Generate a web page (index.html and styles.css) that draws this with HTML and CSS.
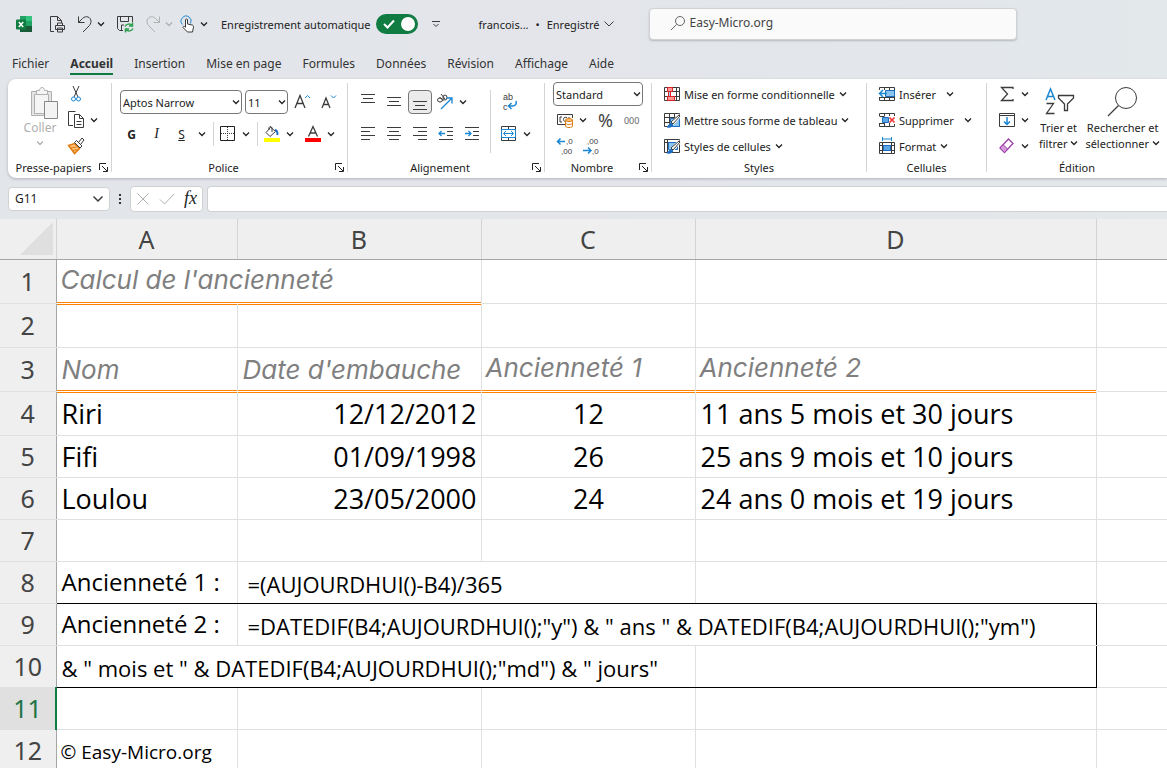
FILE: index.html
```html
<!DOCTYPE html>
<html lang="fr">
<head>
    <meta charset="UTF-8">
    <title>Calcul de l'ancienneté - Excel</title>
    <link rel="stylesheet" href="styles.css">
</head>
<body>
    <svg class="defs" aria-hidden="true">
        <symbol id="chev" viewBox="0 0 8 6"><path d="M1 1.5l3 3 3-3" fill="none" stroke="currentColor" stroke-width="1.3"/></symbol>
        <symbol id="launch" viewBox="0 0 9 9"><path d="M.5 7V.5H7M3 3l5 5M8.500 4v4.500H4" fill="none" stroke="currentColor"/></symbol>
    </svg>

    <header class="titlebar">
        <svg class="logo" width="20" height="20" viewBox="0 0 20 20">
            <path fill="#21a366" d="M6 2h6v6H6z"/><path fill="#33c481" d="M12 2h6v5h-6z"/>
            <path fill="#107c41" d="M6 7h6v5H6z"/><path fill="#21a366" d="M12 7h6v5h-6z"/>
            <path fill="#185c37" d="M6 12h12v6H6z"/><rect x="2" y="5.500" width="10" height="10" rx="1" fill="#107c41"/>
            <path d="M4.800 8l4.400 5M9.200 8l-4.400 5" stroke="#fff" stroke-width="1.500"/>
        </svg>
        <button class="tool" aria-label="Aperçu et impression"><svg width="20" height="20" viewBox="0 0 20 20" class="ic"><path d="M7 17.500H3.500v-15h7l4 4V9M10.500 2.500v4h4M8.500 11.500h9v4h-9zM10.500 11V9h5v2M10.500 14h5v4h-5z"/></svg></button>
        <button class="tool" aria-label="Annuler"><svg width="20" height="20" viewBox="0 0 20 20" class="ic"><path d="M3.500 2.500v6h6M3.500 8.500l4-4C11 1 16 3 16 7.500c0 2-1 3.500-3 5.500l-5 5"/></svg><svg class="chev"><use href="#chev"/></svg></button>
        <button class="tool" aria-label="Enregistrer"><svg width="20" height="20" viewBox="0 0 20 20" class="ic"><path d="M8 16.500H4.500l-2-2v-12h15V8M5.500 2.500v5h8v-5M6.500 16v-5H9"/><path class="g" d="M10 12.500c1-2.500 5-3.500 7-1M17.500 8.500v3.500H14M18 14.500c-1 2.500-5 3.500-7 1M10.500 18.500V15H14"/></svg></button>
        <button class="tool off" aria-label="Rétablir" disabled><svg width="20" height="20" viewBox="0 0 20 20" class="ic"><path d="M16.500 2.500v6h-6M16.500 8.500l-4-4C9 1 4 3 4 7.500c0 2 1 3.500 3 5.500l5 5"/></svg><svg class="chev"><use href="#chev"/></svg></button>
        <button class="tool touch" aria-label="Mode tactile/souris"><svg width="20" height="20" viewBox="0 0 20 20" class="ic"><path class="b" d="M4.500 10.500a5 5 0 1 1 8-1"/><path fill="#fff" d="M7.500 13V6c0-1.500 2-1.500 2 0v4l4.500 1c1 0 1.500 1 1.500 2l-1 5H9.500L5 13.500c0-1.500 1.500-1.500 2.500 0"/></svg><svg class="chev"><use href="#chev"/></svg></button>
        <label class="autosave">Enregistrement automatique
            <input type="checkbox" checked><span class="switch"><svg width="12" height="10" viewBox="0 0 12 10"><path d="M1 5l3.500 3.500L11 1.500" fill="none" stroke="#fff" stroke-width="2"/></svg><i></i></span>
        </label>
        <button class="tool custom" aria-label="Personnaliser la barre"><svg width="10" height="8" viewBox="0 0 10 8" class="ic"><path d="M1 1.500h8M2.500 4L5 6.500 7.500 4"/></svg></button>
        <button class="file"><span>francois...</span><span>•</span><span>Enregistré</span><svg width="12" height="8" viewBox="0 0 12 8" class="ic"><path d="M1.500 1.500L6 6l4.500-4.500"/></svg></button>
        <label class="search">
            <svg width="16" height="16" viewBox="0 0 16 16" class="ic"><circle cx="10" cy="6" r="4.500"/><path d="M6.500 9.500L1 15"/></svg>
            <input type="text" value="Easy-Micro.org" aria-label="Rechercher">
        </label>
    </header>

    <nav class="tabs">
        <a href="#">Fichier</a>
        <a href="#" class="active">Accueil</a>
        <a href="#">Insertion</a>
        <a href="#">Mise en page</a>
        <a href="#">Formules</a>
        <a href="#">Données</a>
        <a href="#">Révision</a>
        <a href="#">Affichage</a>
        <a href="#">Aide</a>
    </nav>

    <section class="ribbon">
        <div class="group clipboard">
            <div class="tools">
                <button class="big off" disabled>
                    <svg width="30" height="34" viewBox="0 0 30 34" class="ic"><path fill="#e4e4e4" d="M3.500 5.500h20v24h-20z"/><path fill="#f5f5f5" d="M6.500 8.500h14v19h-14z"/><path fill="#f5f5f5" d="M8.500 8.500v-4h3c0-4 5-4 5 0h3v4z"/><path fill="#f3f3f3" stroke="#888" d="M16.500 15.500h13v17h-13z"/></svg>
                    <span>Coller</span><svg class="chev"><use href="#chev"/></svg>
                </button>
                <div class="stack">
                    <button class="tool" aria-label="Couper"><svg width="20" height="20" viewBox="0 0 20 20" class="ic"><path d="M7 2l5 11M13 2L8 13"/><g class="b"><circle cx="7.500" cy="15" r="2"/><circle cx="12.500" cy="15" r="2"/></g></svg></button>
                    <button class="tool" aria-label="Copier"><svg width="20" height="20" viewBox="0 0 20 20" class="ic"><path d="M7 15.500H2.500v-14h7M8.500 4.500h5l4 4v9h-9zM13.500 4.500v4h4M10.500 11.500h5M10.500 14.500h5"/></svg><svg class="chev"><use href="#chev"/></svg></button>
                    <button class="tool" aria-label="Reproduire la mise en forme"><svg width="20" height="20" viewBox="0 0 20 20" class="ic"><path fill="#ffc27a" stroke="#e07b10" stroke-width="1.500" d="M2.500 9.500l6-2 5 5-5 5z"/><path stroke="#e07b10" d="M4.500 12l6-1M6.500 14.500l5-1"/><path fill="#fff" d="M8.500 6.500l2-2 5.500 5.500-2 2zM12.500 6.500l3.500-4.500 2 2-3.500 4.500"/></svg></button>
                </div>
            </div>
            <div class="caption"><span>Presse-papiers</span><button aria-label="Options du presse-papiers"><svg width="9" height="9"><use href="#launch"/></svg></button></div>
        </div>
        <div class="vsep"></div>

        <div class="group font">
            <div class="tools two">
                <div class="line">
                    <span class="combo name"><select aria-label="Police"><option>Aptos Narrow</option></select><svg class="chev"><use href="#chev"/></svg></span>
                    <span class="combo size"><select aria-label="Taille"><option>11</option></select><svg class="chev"><use href="#chev"/></svg></span>
                    <button class="tool wide" aria-label="Agrandir la police"><svg width="20" height="20" viewBox="0 0 20 20" class="ic"><path stroke-width="1.300" d="M3 16L8 3.500 13 16M4.800 11.500h6.400"/><path class="b" d="M13 6l2.500-2.500L18 6"/></svg></button>
                    <button class="tool wide" aria-label="Réduire la police"><svg width="20" height="20" viewBox="0 0 20 20" class="ic"><path stroke-width="1.300" d="M4 16L8 6l4 10M5.500 12.500h5"/><path class="b" d="M13 3.500L15.500 6 18 3.500"/></svg></button>
                </div>
                <div class="line format">
                    <button class="tool letter"><b>G</b></button>
                    <button class="tool letter"><em>I</em></button>
                    <button class="tool letter"><u>S</u></button>
                    <button class="tool" aria-label="Options de soulignement"><svg class="chev"><use href="#chev"/></svg></button>
                    <span class="sep"></span>
                    <button class="tool" aria-label="Bordures"><svg width="20" height="20" viewBox="0 0 20 20" class="ic"><path stroke="#222" d="M2.500 2.500h14v14h-14z"/><path stroke-dasharray="1 1" d="M3 9.500h13M9.500 3v13"/></svg><svg class="chev"><use href="#chev"/></svg></button>
                    <span class="sep"></span>
                    <button class="tool" aria-label="Couleur de remplissage"><svg width="20" height="20" viewBox="0 0 20 20" class="ic"><path fill="#ff0" stroke="none" d="M2 14h16v4H2z"/><path d="M8.500 3.500L4 8.500l4 4 5.500-5-5-4.500zM7 6c-1-3 2-5 3-2v4"/><path stroke="#1b6ec2" stroke-width="2" d="M13 6c2 0 2.500 2 2.500 5"/></svg><svg class="chev"><use href="#chev"/></svg></button>
                    <button class="tool color" aria-label="Couleur de police"><svg width="20" height="20" viewBox="0 0 20 20" class="ic"><path fill="red" stroke="none" d="M2 14h16v4H2z"/><path stroke-width="1.300" d="M5.500 12.500l4.500-10 4.500 10M7 9h6"/></svg><svg class="chev"><use href="#chev"/></svg></button>
                </div>
            </div>
            <div class="caption"><span>Police</span><button aria-label="Options de police"><svg width="9" height="9"><use href="#launch"/></svg></button></div>
        </div>
        <div class="vsep"></div>

        <div class="group align">
            <div class="tools">
                <div class="two">
                    <div class="line">
                        <button class="tool wide" aria-label="Aligner en haut"><svg width="20" height="20" viewBox="0 0 20 20" class="ic"><path d="M3 2.500h14M5 6.500h10M3 10.500h14"/></svg></button>
                        <button class="tool wide" aria-label="Aligner au centre"><svg width="20" height="20" viewBox="0 0 20 20" class="ic"><path d="M3 5.500h14M5 9.500h10M3 13.500h14"/></svg></button>
                        <button class="tool pressed" aria-label="Aligner en bas"><svg width="20" height="20" viewBox="0 0 20 20" class="ic"><path d="M3 9.500h14M5 13.500h10M3 17.500h14"/></svg></button>
                        <button class="tool orient" aria-label="Orientation"><svg width="20" height="20" viewBox="0 0 20 20" class="ic"><ellipse cx="5" cy="8" rx="2.500" ry="2"/><path d="M4.500 5l4 4"/><ellipse cx="10" cy="5.500" rx="2" ry="2.500"/><path d="M6 2l4 5"/><path class="b" stroke-width="1.300" d="M6 17L17 6M11.500 6H17v5.500"/></svg><svg class="chev"><use href="#chev"/></svg></button>
                    </div>
                    <div class="line">
                        <button class="tool wide" aria-label="Aligner à gauche"><svg width="20" height="20" viewBox="0 0 20 20" class="ic"><path d="M3 3.500h14M3 7.500h9M3 11.500h14M3 15.500h9"/></svg></button>
                        <button class="tool wide" aria-label="Centrer"><svg width="20" height="20" viewBox="0 0 20 20" class="ic"><path d="M3 3.500h14M5 7.500h10M3 11.500h14M5 15.500h10"/></svg></button>
                        <button class="tool wide" aria-label="Aligner à droite"><svg width="20" height="20" viewBox="0 0 20 20" class="ic"><path d="M3 3.500h14M8 7.500h9M3 11.500h14M8 15.500h9"/></svg></button>
                        <button class="tool wide" aria-label="Diminuer le retrait"><svg width="20" height="20" viewBox="0 0 20 20" class="ic"><path d="M3 3.500h14M11 7.500h6M11 11.500h6M3 15.500h14"/><path class="b" stroke-width="1.300" d="M9 9.500H3M5.500 7L3 9.500 5.500 12"/></svg></button>
                        <button class="tool wide" aria-label="Augmenter le retrait"><svg width="20" height="20" viewBox="0 0 20 20" class="ic"><path d="M3 3.500h14M11 7.500h6M11 11.500h6M3 15.500h14"/><path class="b" stroke-width="1.300" d="M3 9.500h6M6.500 7L9 9.500 6.500 12"/></svg></button>
                    </div>
                </div>
                <div class="vsep inner"></div>
                <div class="two wrapcol">
                    <div class="line">
                        <button class="tool" aria-label="Renvoyer à la ligne"><svg width="20" height="20" viewBox="0 0 20 20" class="ic"><text class="ab" x="4" y="8">ab</text><text class="ab" x="4" y="18">c</text><path class="b" stroke-width="1.500" d="M17 9c1 3-1 5-3 5h-4M12.500 11l-3 3 3 3"/></svg></button>
                    </div>
                    <div class="line">
                        <button class="tool" aria-label="Fusionner et centrer"><svg width="20" height="20" viewBox="0 0 20 20" class="ic"><path d="M2.500 2.500h14v14h-14zM9.500 2v4M9.500 13v4"/><path class="b" fill="#fff" d="M2.500 5.500h14v8h-14z"/><path class="b" d="M5 9.500h9M7 7L4.500 9.500 7 12M12 7l2.500 2.500L12 12"/></svg><svg class="chev"><use href="#chev"/></svg></button>
                    </div>
                </div>
            </div>
            <div class="caption"><span>Alignement</span><button aria-label="Options d'alignement"><svg width="9" height="9"><use href="#launch"/></svg></button></div>
        </div>
        <div class="vsep"></div>

        <div class="group number">
            <div class="tools three">
                <div class="line"><span class="combo fmt"><select aria-label="Format de nombre"><option>Standard</option></select><svg class="chev"><use href="#chev"/></svg></span></div>
                <div class="line money">
                    <button class="tool" aria-label="Format comptable"><svg width="20" height="20" viewBox="0 0 20 20" class="ic"><path d="M10 14.500H2.500v-10h15V8M7 7H5v5h2M12 7.500c-3-1-3.500 1-3.500 2s.500 2 2 2M14 8V7"/><path fill="#fff" stroke="#e07b10" d="M10.500 10v6c0 2 7 2 7 0v-6"/><ellipse cx="14" cy="10" rx="3.500" ry="1.500" fill="#ffc27a" stroke="#e07b10"/><path stroke="#e07b10" d="M10.500 13c0 2 7 2 7 0"/></svg><svg class="chev"><use href="#chev"/></svg></button>
                    <button class="tool pct">%</button>
                    <button class="tool zeros">000</button>
                </div>
                <div class="line">
                    <button class="tool wide" aria-label="Ajouter une décimale"><svg width="20" height="20" viewBox="0 0 20 20" class="ic"><path class="b" stroke-width="1.500" d="M10 5.500H2.500M5.500 2.500l-3 3 3 3"/><text x="11" y="8">,0</text><text x="6" y="18">,00</text></svg></button>
                    <button class="tool wide" aria-label="Réduire les décimales"><svg width="20" height="20" viewBox="0 0 20 20" class="ic"><text x="6" y="8">,00</text><text x="11" y="18">,0</text><path class="b" stroke-width="1.500" d="M2 14.500h8M7 11.500l3 3-3 3"/></svg></button>
                </div>
            </div>
            <div class="caption"><span>Nombre</span><button aria-label="Options de nombre"><svg width="9" height="9"><use href="#launch"/></svg></button></div>
        </div>
        <div class="vsep"></div>

        <div class="group styles">
            <div class="tools three">
                <button class="text"><svg width="20" height="20" viewBox="0 0 20 20" class="ic"><path d="M2.500 3.500h15v13h-15zM2 7.500h15M2 12.500h15M6.500 3v13M14.500 3v13"/><path fill="#f99" stroke="#d22" d="M5.500 3.500h5v4h-5zM5.500 12.500h7v4h-7z"/><path fill="#9cf" stroke="#d22" d="M6.500 7.500h2v5h-2z"/></svg>Mise en forme conditionnelle<svg class="chev"><use href="#chev"/></svg></button>
                <button class="text"><svg width="20" height="20" viewBox="0 0 20 20" class="ic"><path d="M2.500 3.500h15v13h-15zM2 7.500h15M2 12.500h6M7.500 3v13M12.500 3v5"/><path fill="#8cc4f0" stroke="#1b6ec2" d="M8.500 8.500h9v8h-9z"/><path stroke="#fff" stroke-width="4" d="M18 5l-9 10"/><path fill="#fff" d="M17 5l1 1-7 8-2-2z"/><path fill="#1b6ec2" stroke="#1b6ec2" d="M9 13l2 2c-1 2-3 2.500-6 2 2-1 2-3 4-4z"/></svg>Mettre sous forme de tableau<svg class="chev"><use href="#chev"/></svg></button>
                <button class="text"><svg width="20" height="20" viewBox="0 0 20 20" class="ic"><path d="M2.500 3.500h15v13h-15zM2 6.500h15M5.500 3v13"/><path fill="#8cc4f0" stroke="#1b6ec2" d="M6.500 6.500h9v7h-9z"/><path stroke="#fff" stroke-width="4" d="M18 5l-9 10"/><path fill="#fff" d="M17 5l1 1-7 8-2-2z"/><path fill="#1b6ec2" stroke="#1b6ec2" d="M9 13l2 2c-1 2-3 2.500-6 2 2-1 2-3 4-4z"/></svg>Styles de cellules<svg class="chev"><use href="#chev"/></svg></button>
            </div>
            <div class="caption"><span>Styles</span></div>
        </div>
        <div class="vsep"></div>

        <div class="group cells">
            <div class="tools three">
                <button class="text"><svg width="20" height="20" viewBox="0 0 20 20" class="ic"><path d="M2.500 6V3.500h15v13h-15V13M7.500 3v3M12.500 3v13M7.500 13v3M2.500 13.500h15"/><path fill="#8cc4f0" stroke="#1b6ec2" d="M8.500 6.500h9v6h-9z"/><path class="b" stroke-width="1.500" d="M10 9.500H2.500M6 6L2.500 9.500 6 13"/></svg>Insérer<svg class="chev far"><use href="#chev"/></svg></button>
                <button class="text"><svg width="20" height="20" viewBox="0 0 20 20" class="ic"><path d="M2.500 6V3.500h15V6M2.500 13v3.500h15V14M7.500 3v3M12.500 3v3M7.500 13v3M12.500 13v3M2.500 6.500h5M2.500 13.500h5"/><path fill="#5ba7e6" stroke="#1b6ec2" d="M5.500 7.500h6v5h-6z"/><path stroke="#e33" stroke-width="1.600" d="M12.500 7.500l5 5M17.500 7.500l-5 5"/></svg>Supprimer<svg class="chev far"><use href="#chev"/></svg></button>
                <button class="text"><svg width="20" height="20" viewBox="0 0 20 20" class="ic"><path d="M2.500 6.500h15v11h-15zM2.500 9.500h15M2.500 14.500h15M5.500 6v11M14.500 6v11"/><path fill="#5ba7e6" stroke="#1b6ec2" d="M6.500 9.500h7v5h-7z"/><path class="b" d="M5.500 1v4M14.500 1v4M6 3h8"/></svg>Format<svg class="chev"><use href="#chev"/></svg></button>
            </div>
            <div class="caption"><span>Cellules</span></div>
        </div>
        <div class="vsep"></div>

        <div class="group edit">
            <div class="tools">
                <div class="three">
                    <div class="line"><button class="tool" aria-label="Somme automatique"><svg width="20" height="20" viewBox="0 0 20 20" class="ic"><path stroke-width="1.300" d="M16 5V3.500H4.500l6 6.500-6 6.500H16V15"/></svg><svg class="chev"><use href="#chev"/></svg></button></div>
                    <div class="line"><button class="tool" aria-label="Recopier"><svg width="20" height="20" viewBox="0 0 20 20" class="ic"><path d="M2.500 3.500h15v13h-15zM2.500 5.500h15"/><path class="b" stroke-width="1.500" d="M10 7v7M7 11.500l3 3 3-3"/></svg><svg class="chev"><use href="#chev"/></svg></button></div>
                    <div class="line"><button class="tool" aria-label="Effacer"><svg width="20" height="20" viewBox="0 0 20 20" class="ic"><path fill="#fff" stroke="#9b3fa8" stroke-width="1.300" d="M3 12l8.500-9 4.500 4.500-8.500 9z"/><path fill="#d69bdd" stroke="#9b3fa8" d="M3 12l3-3.500 4.500 4.500-3 3.500z"/></svg><svg class="chev"><use href="#chev"/></svg></button></div>
                </div>
                <button class="big sort">
                    <svg width="34" height="34" viewBox="0 0 34 34" class="ic"><path class="b" stroke-width="1.500" d="M4 14L8.500 3 13 14M5.500 10.500h6"/><path stroke-width="1.300" d="M4.500 17.500h7l-7 10h8"/><path stroke-width="1.300" d="M16.500 9.500h15V12l-6 6v6.500h-3V18l-6-6z"/></svg>
                    <span>Trier et<br>filtrer <svg class="chev"><use href="#chev"/></svg></span>
                </button>
                <button class="big find">
                    <svg width="34" height="34" viewBox="0 0 34 34" class="ic"><circle cx="20" cy="12" r="10.500"/><path stroke-width="1.300" d="M12.500 19.500L2 30"/></svg>
                    <span>Rechercher et<br>sélectionner <svg class="chev"><use href="#chev"/></svg></span>
                </button>
            </div>
            <div class="caption"><span>Édition</span></div>
        </div>
    </section>

    <div class="formulabar">
        <span class="combo ref"><select aria-label="Zone Nom"><option>G11</option></select><svg width="12" height="8" viewBox="0 0 12 8" class="ic"><path stroke-width="1.500" d="M1.500 1.500L6 6l4.500-4.500"/></svg></span>
        <span class="dots"><i></i><i></i><i></i></span>
        <div class="fx">
            <button class="tool off" aria-label="Annuler la saisie"><svg width="14" height="14" viewBox="0 0 14 14" class="ic"><path d="M1.500 1.500l11 11M12.500 1.500l-11 11"/></svg></button>
            <button class="tool off" aria-label="Entrer"><svg width="16" height="14" viewBox="0 0 16 14" class="ic"><path d="M1 7.500L5.500 12 15 2"/></svg></button>
            <button class="tool fn">fx</button>
        </div>
        <input class="formula" type="text" aria-label="Barre de formule">
    </div>

    <main class="sheet">
        <table>
            <colgroup><col class="c-row"><col class="c-a"><col class="c-b"><col class="c-c"><col class="c-d"><col></colgroup>
            <thead>
                <tr><th class="corner"><svg width="33" height="33" viewBox="0 0 33 33"><path d="M33 0v33H0z" fill="#dfdfdf"/></svg></th><th>A</th><th>B</th><th>C</th><th>D</th><th></th></tr>
            </thead>
            <tbody>
                <tr class="tall"><th>1</th><td colspan="2" class="head raised">Calcul de l'ancienneté</td><td></td><td></td><td></td></tr>
                <tr class="tall after"><th>2</th><td class="ruled"></td><td class="ruled"></td><td></td><td></td><td></td></tr>
                <tr class="tall"><th>3</th><td class="head">Nom</td><td class="head">Date d'embauche</td><td class="head raised">Ancienneté 1</td><td class="head raised">Ancienneté 2</td><td></td></tr>
                <tr class="tall"><th>4</th><td class="ruled">Riri</td><td class="ruled right">12/12/2012</td><td class="ruled center">12</td><td class="ruled">11 ans 5 mois et 30 jours</td><td></td></tr>
                <tr><th>5</th><td>Fifi</td><td class="right">01/09/1998</td><td class="center">26</td><td>25 ans 9 mois et 10 jours</td><td></td></tr>
                <tr><th>6</th><td>Loulou</td><td class="right">23/05/2000</td><td class="center">24</td><td>24 ans 0 mois et 19 jours</td><td></td></tr>
                <tr><th>7</th><td></td><td></td><td></td><td></td><td></td></tr>
                <tr class="above"><th>8</th><td class="label">Ancienneté 1 :</td><td colspan="2" class="code indent">=(AUJOURDHUI()-B4)/365</td><td></td><td></td></tr>
                <tr><th>9</th><td class="label">Ancienneté 2 :</td><td colspan="3" class="code indent edge">=DATEDIF(B4;AUJOURDHUI();"y") &amp; " ans " &amp; DATEDIF(B4;AUJOURDHUI();"ym")</td><td></td></tr>
                <tr class="above"><th>10</th><td colspan="3" class="code">&amp; " mois et " &amp; DATEDIF(B4;AUJOURDHUI();"md") &amp; " jours"</td><td class="edge"></td><td></td></tr>
                <tr class="current"><th>11</th><td></td><td></td><td></td><td></td><td></td></tr>
                <tr><th>12</th><td class="credit">© Easy-Micro.org</td><td></td><td></td><td></td><td></td></tr>
            </tbody>
        </table>
    </main>
</body>
</html>
```
FILE: styles.css
```css
* {
    box-sizing: border-box;
}

body {
    display: flex;
    flex-direction: column;
    height: 100vh;
    margin: 0;
    overflow: hidden;
    background: linear-gradient(90deg, #e2e5ea, #e3e5ea 50%, #e3e8eb);
    font-family: "Noto Sans", "Open Sans", sans-serif;
    font-size: 11px;
    color: #222;
}

button, input, select {
    font: inherit;
    color: inherit;
}

button {
    display: flex;
    align-items: center;
    flex: none;
    padding: 0;
    border: 0;
    background: none;
    white-space: nowrap;
}

svg {
    flex: none;
    display: block;
}

.defs {
    position: absolute;
    width: 0;
    height: 0;
}

.ic {
    fill: none;
    stroke: #3b3b3b;
}

.ic .b {
    stroke: #1b87d2;
}

.ic .g {
    stroke: #2fa04e;
    stroke-width: 1.5;
}

.ic text {
    font-family: "Liberation Sans", sans-serif;
    font-size: 8px;
    fill: #3b3b3b;
    stroke: none;
}

.ic .ab {
    font-size: 9px;
}

.chev {
    width: 8px;
    height: 6px;
    margin: 0 4px;
}

.off, .off .ic {
    color: #b0b0b0;
    stroke: #b0b0b0;
}

/* title bar */
.titlebar {
    display: flex;
    align-items: center;
    gap: 8px;
    height: 48px;
    padding-left: 14px;
}

.titlebar .chev {
    margin: 0 2px;
}

.logo {
    margin-right: 5px;
}

.touch {
    margin-left: -5px;
}

.autosave {
    display: flex;
    align-items: center;
    gap: 5px;
    padding-left: 3px;
    white-space: nowrap;
}

.autosave input {
    position: absolute;
    opacity: 0;
}

.switch {
    display: flex;
    align-items: center;
    justify-content: space-between;
    width: 42px;
    height: 20px;
    padding: 0 3px 0 7px;
    border-radius: 10px;
    background: #107c41;
}

.switch i {
    width: 14px;
    height: 14px;
    border-radius: 50%;
    background: #fff;
}

.custom {
    margin: 0 24px 0 5px;
}

.file {
    gap: 7px;
    padding-left: 6px;
}

.file .ic {
    margin-left: -3px;
}

.search {
    display: flex;
    align-items: center;
    gap: 3px;
    flex: 0 1 368px;
    height: 32px;
    margin-left: 26px;
    padding: 0 20px 3px;
    border: 1px solid #d0d2d5;
    border-radius: 4px;
    background: #fafafa;
    box-shadow: 0 1px 2px #b5b8bc;
}

.search input {
    flex: 1;
    min-width: 0;
    padding: 0;
    border: 0;
    background: none;
    font-size: 12px;
    color: #444;
}

.search .ic {
    stroke: #666;
}

/* ribbon tabs */
.tabs {
    display: flex;
    gap: 21px;
    height: 31px;
    padding: 6px 12px 0;
    font-size: 12px;
    line-height: 20px;
}

.tabs a {
    height: 21px;
    color: #333;
    text-decoration: none;
}

.tabs .active {
    border-bottom: 2px solid #107c41;
    font-weight: bold;
}

/* ribbon */
.ribbon {
    display: flex;
    height: 99px;
    margin-left: 8px;
    border-radius: 8px 0 0 8px;
    background: #fff;
    box-shadow: 0 1px 3px #aeb1b6;
}

.vsep {
    flex: none;
    width: 1px;
    margin: 4px 0 6px;
    background: #d4d4d4;
}

.group {
    display: flex;
    flex-direction: column;
    flex: none;
    padding-top: 2px;
}

.clipboard { width: 103px; }
.font { width: 235px; }
.align { width: 196px; }
.number { width: 106px; }
.styles { width: 214px; }
.cells { width: 119px; }
.edit { flex: 1; }

.tools {
    display: flex;
    height: 78px;
}

.two, .three {
    display: flex;
    flex-direction: column;
}

.two {
    padding-top: 5px;
}

.two .line {
    height: 32px;
}

.three > * {
    height: 26px;
}

.line {
    display: flex;
    align-items: center;
}

.stack {
    display: grid;
    grid-auto-rows: 26px;
    padding-left: 6px;
}

.caption {
    display: flex;
    align-items: center;
    height: 16px;
}

.caption span {
    flex: 1;
    text-align: center;
}

.caption button {
    margin-right: 3px;
}

.wide {
    width: 26px;
    justify-content: center;
}

.big {
    flex-direction: column;
    line-height: 16px;
}

.big span .chev {
    display: inline-block;
    margin: 0 0 2px;
}

.clipboard .big {
    width: 40px;
    margin-left: 12px;
    padding-top: 5px;
    font-size: 12px;
}

.clipboard .big .ic {
    margin-left: 6px;
}

.clipboard .big .chev {
    margin-top: 4px;
}

.combo {
    display: flex;
    align-items: center;
    height: 24px;
    border: 1px solid #777;
    border-radius: 4px;
    background: #fff;
}

.combo select {
    flex: 1;
    min-width: 0;
    height: 22px;
    padding: 0 0 0 2px;
    border: 0;
    background: none;
    appearance: none;
}

.combo .chev {
    margin: 0 1px;
}

.font .tools {
    padding-left: 7px;
}

.font .line:first-child {
    padding-left: 1px;
}

.name { width: 122px; }
.size { width: 43px; margin: 0 1px 0 3px; }
.fmt { width: 90px; margin-left: 1px; }

.letter {
    justify-content: center;
    width: 25px;
    font-size: 12px;
}

.letter em {
    font-family: "Liberation Serif", serif;
    font-size: 14px;
}

.sep {
    width: 1px;
    height: 24px;
    margin: 0 4px 0 3px;
    background: #d4d4d4;
}

.color {
    margin-left: 5px;
}

.align .tools {
    padding-left: 7px;
}

.pressed {
    justify-content: center;
    width: 24px;
    height: 24px;
    margin: 0 1px;
    border: 1px solid #777;
    border-radius: 4px;
    background: #ebebeb;
}

.orient {
    margin-left: 2px;
}

.inner {
    margin: 9px 4px 6px 5px;
}

.wrapcol {
    padding-left: 4px;
}

.number .tools {
    padding-left: 7px;
}

.money {
    padding-left: 3px;
}

.pct {
    margin-left: 7px;
    font-size: 18px;
    color: #444;
}

.zeros {
    margin-left: 11px;
    font-size: 9px;
    color: #666;
}

.styles .tools, .cells .tools {
    padding-left: 10px;
}

.text {
    gap: 2px;
}

.text .chev {
    margin: 0 0 0 2px;
}

.text .far {
    margin-left: 8px;
}

.edit .tools {
    padding-left: 10px;
}

.sort {
    margin-left: 6px;
    padding-top: 5px;
}

.find {
    margin-left: 7px;
    padding-top: 5px;
}

/* formula bar */
.formulabar {
    display: flex;
    align-items: center;
    height: 41px;
    padding: 0 0 0 8px;
}

.ref {
    width: 102px;
    border-color: #d0d0d0;
    font-size: 12px;
}

.ref select {
    padding-left: 6px;
}

.ref .ic {
    margin-right: 5px;
}

.dots {
    display: grid;
    gap: 2px;
    width: 20px;
    justify-content: center;
}

.dots i {
    width: 2px;
    height: 2px;
    background: #333;
}

.fx {
    display: flex;
    align-items: center;
    gap: 9px;
    height: 26px;
    padding: 0 5px;
    border: 1px solid #d0d0d0;
    border-radius: 4px;
    background: #fff;
}

.fn {
    font: italic 18px "Liberation Serif", serif;
}

.formula {
    flex: 1;
    min-width: 0;
    height: 26px;
    margin-left: 4px;
    border: 1px solid #d0d0d0;
    border-right: 0;
    border-radius: 4px 0 0 4px;
    background: #fff;
}

/* worksheet */
.sheet {
    flex: 1;
    min-height: 0;
    overflow: hidden;
    background: #fff;
}

table {
    width: 100%;
    table-layout: fixed;
    border-collapse: collapse;
    color: #000;
}

.c-row { width: 56px; }
.c-a { width: 181px; }
.c-b { width: 244px; }
.c-c { width: 214px; }
.c-d { width: 401px; }

tr { height: 42px; }
.tall { height: 44px; }

th, td {
    padding: 0 4px;
    border: 1px solid #e0e0e0;
    line-height: 32px;
    white-space: nowrap;
}

th {
    padding: 0;
    background: #efefef;
    font-size: 25px;
    font-weight: normal;
    color: #444;
}

thead tr {
    height: 40px;
}

thead th {
    border: 1px solid #d4d4d4;
    border-top: 0;
    border-bottom-color: #a6a6a6;
}

tbody th {
    border-right-color: #a6a6a6;
}

th:first-child {
    border-left: 0;
}

th:last-child, td:last-child {
    border-right: 0;
}

.corner svg {
    margin: 0 3px 0 auto;
}

td {
    padding: 2px 4px 0 5px;
    font-family: "Open Sans", sans-serif;
    font-size: 27px;
}

/* double orange rule: last line of the heading, first line of the cell below */
.head {
    border-bottom-color: #fff;
    box-shadow: inset 0 -1px #ff8000;
    font-family: Inter, sans-serif;
    font-size: 26px;
    font-style: italic;
    color: #7f7f7f;
}

.ruled {
    box-shadow: inset 0 1px #ff8000;
}

.raised {
    padding: 0 4px 2px;
}

.right { text-align: right; }
.center { text-align: center; }

.label {
    padding-top: 0;
    font-size: 24px;
}

.code {
    padding-top: 3px;
    font-size: 22px;
}

.indent {
    padding-left: 10px;
}

.credit {
    padding: 3px 4px 0;
    font-size: 19px;
}

.above td:not(:last-child) {
    border-bottom-color: #000;
}

.edge {
    border-right-color: #000;
}

.current th {
    border-right: 2px solid #107c41;
    background: #e0e0e0;
    color: #217346;
}
```
